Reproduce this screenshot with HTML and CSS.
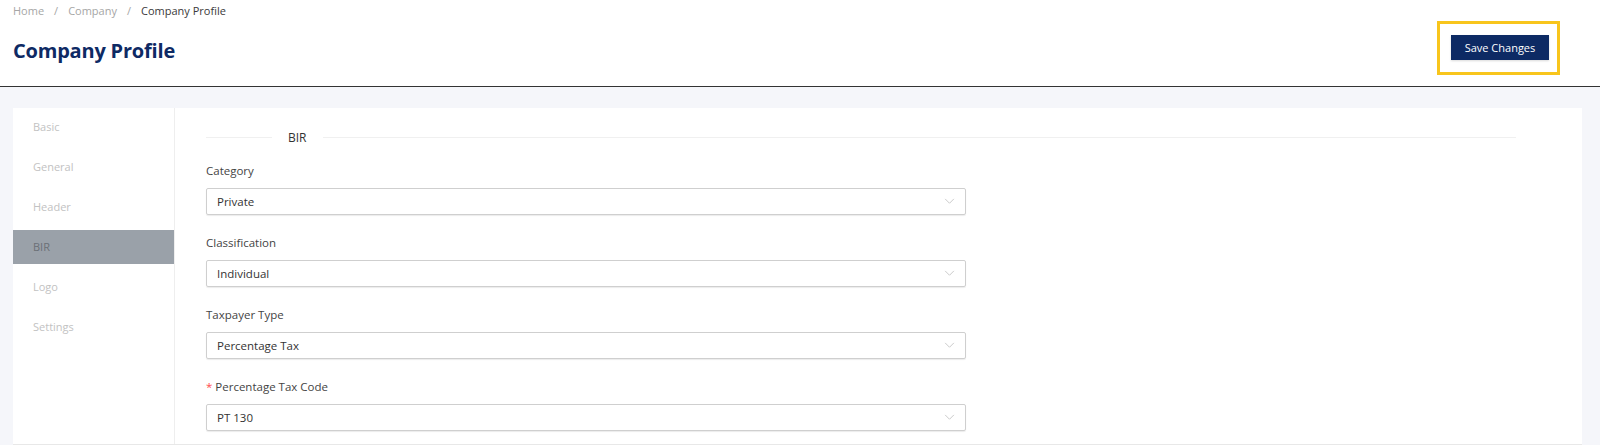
FILE: index.html
```html
<!DOCTYPE html>
<html>
<head>
<meta charset="utf-8">
<link rel="stylesheet" href="styles.css">
</head>
<body>
<div class="page">
  <header class="top">
    <div class="crumbs">
      <span class="crumb">Home</span><span class="sep">/</span><span class="crumb">Company</span><span class="sep">/</span><span class="crumb current">Company Profile</span>
    </div>
    <div class="title-row">
      <h1 class="title">Company Profile</h1>
      <div class="highlight">
        <button class="save">Save Changes</button>
      </div>
    </div>
  </header>
  <main class="body">
    <div class="card">
      <nav class="menu">
        <div class="item">Basic</div>
        <div class="item">General</div>
        <div class="item">Header</div>
        <div class="item active">BIR</div>
        <div class="item">Logo</div>
        <div class="item">Settings</div>
      </nav>
      <section class="content">
        <div class="divider"><span class="line left"></span><span class="dtext">BIR</span><span class="line right"></span></div>
        <div class="field">
          <label class="label">Category</label>
          <div class="select"><span>Private</span><svg class="arrow" viewBox="0 0 12 8" width="11" height="7"><path d="M1 1 L6 6 L11 1" fill="none" stroke="#c4c4c4" stroke-width="1"/></svg></div>
        </div>
        <div class="field">
          <label class="label">Classification</label>
          <div class="select"><span>Individual</span><svg class="arrow" viewBox="0 0 12 8" width="11" height="7"><path d="M1 1 L6 6 L11 1" fill="none" stroke="#c4c4c4" stroke-width="1"/></svg></div>
        </div>
        <div class="field">
          <label class="label">Taxpayer Type</label>
          <div class="select"><span>Percentage Tax</span><svg class="arrow" viewBox="0 0 12 8" width="11" height="7"><path d="M1 1 L6 6 L11 1" fill="none" stroke="#c4c4c4" stroke-width="1"/></svg></div>
        </div>
        <div class="field">
          <label class="label"><span class="req">*</span> Percentage Tax Code</label>
          <div class="select"><span>PT 130</span><svg class="arrow" viewBox="0 0 12 8" width="11" height="7"><path d="M1 1 L6 6 L11 1" fill="none" stroke="#c4c4c4" stroke-width="1"/></svg></div>
        </div>
      </section>
    </div>
  </main>
</div>
</body>
</html>
```
FILE: styles.css
```css
* { box-sizing: border-box; }
html, body { margin: 0; padding: 0; }
body {
  width: 1600px;
  height: 445px;
  overflow: hidden;
  font-family: "Open Sans", "Noto Sans", sans-serif;
  background: #f5f6fa;
  color: #333;
}
.page { display: flex; flex-direction: column; height: 445px; }
.top {
  background: #fff;
  height: 87px;
  border-bottom: 1px solid #333;
  padding: 3px 40px 0 13px;
}
.crumbs { font-size: 11px; color: #a6a6a6; line-height: 16px; }
.crumb.current { color: #3a3a3a; }
.sep { margin: 0 10px; }
.title-row {
  display: flex;
  justify-content: space-between;
  align-items: flex-start;
  margin-top: 2px;
}
.title {
  margin: 0;
  font-size: 20px;
  font-weight: 700;
  color: #0e2a64;
  letter-spacing: -0.2px;
  padding-top: 16px;
  line-height: 28px;
}
.highlight {
  border: 3px solid #f8c51c;
  padding: 11px 8px 12px 11px;
}
.save {
  background: #0d2a64;
  color: #fff;
  border: 1px solid #0d2a64;
  font-family: "Open Sans", sans-serif;
  font-size: 11px;
  height: 25px;
  width: 98px;
  padding: 0;
  box-shadow: 0 1px 2px rgba(0,0,0,0.15);
}
.body { flex: 1; padding: 21px 18px 0 13px; }
.card {
  background: #fff;
  display: flex;
  height: 100%;
  border-bottom: 1px solid #e8e8e8;
}
.menu {
  width: 162px;
  border-right: 1px solid #eeeeee;
  padding-top: 2px;
}
.item {
  height: 34px;
  line-height: 34px;
  margin-bottom: 6px;
  padding-left: 20px;
  font-size: 11px;
  color: #c2c2c2;
}
.item.active { background: #9aa1a9; color: #6b7077; }
.content { flex: 1; padding: 21px 66px 0 31px; }
.divider { display: flex; align-items: center; height: 16px; }
.line { height: 1px; background: #f0f0f0; }
.line.left { width: 66px; }
.line.right { flex: 1; }
.dtext { padding: 0 16px; font-size: 12px; color: #333; }
.field { margin-top: 18px; }
.field + .field { margin-top: 20px; }
.label { display: block; font-size: 11.5px; color: #444; line-height: 16px; margin-bottom: 9px; }
.req { color: #ff4d4f; }
.select {
  width: 760px;
  height: 27px;
  border: 1px solid #cfcfcf;
  border-radius: 2px;
  display: flex;
  align-items: center;
  justify-content: space-between;
  padding: 0 10px 0 10px;
  font-size: 11.5px;
  color: #333;
  box-shadow: 0 1px 1px rgba(0,0,0,0.08);
}
.arrow { display: block; }
```
